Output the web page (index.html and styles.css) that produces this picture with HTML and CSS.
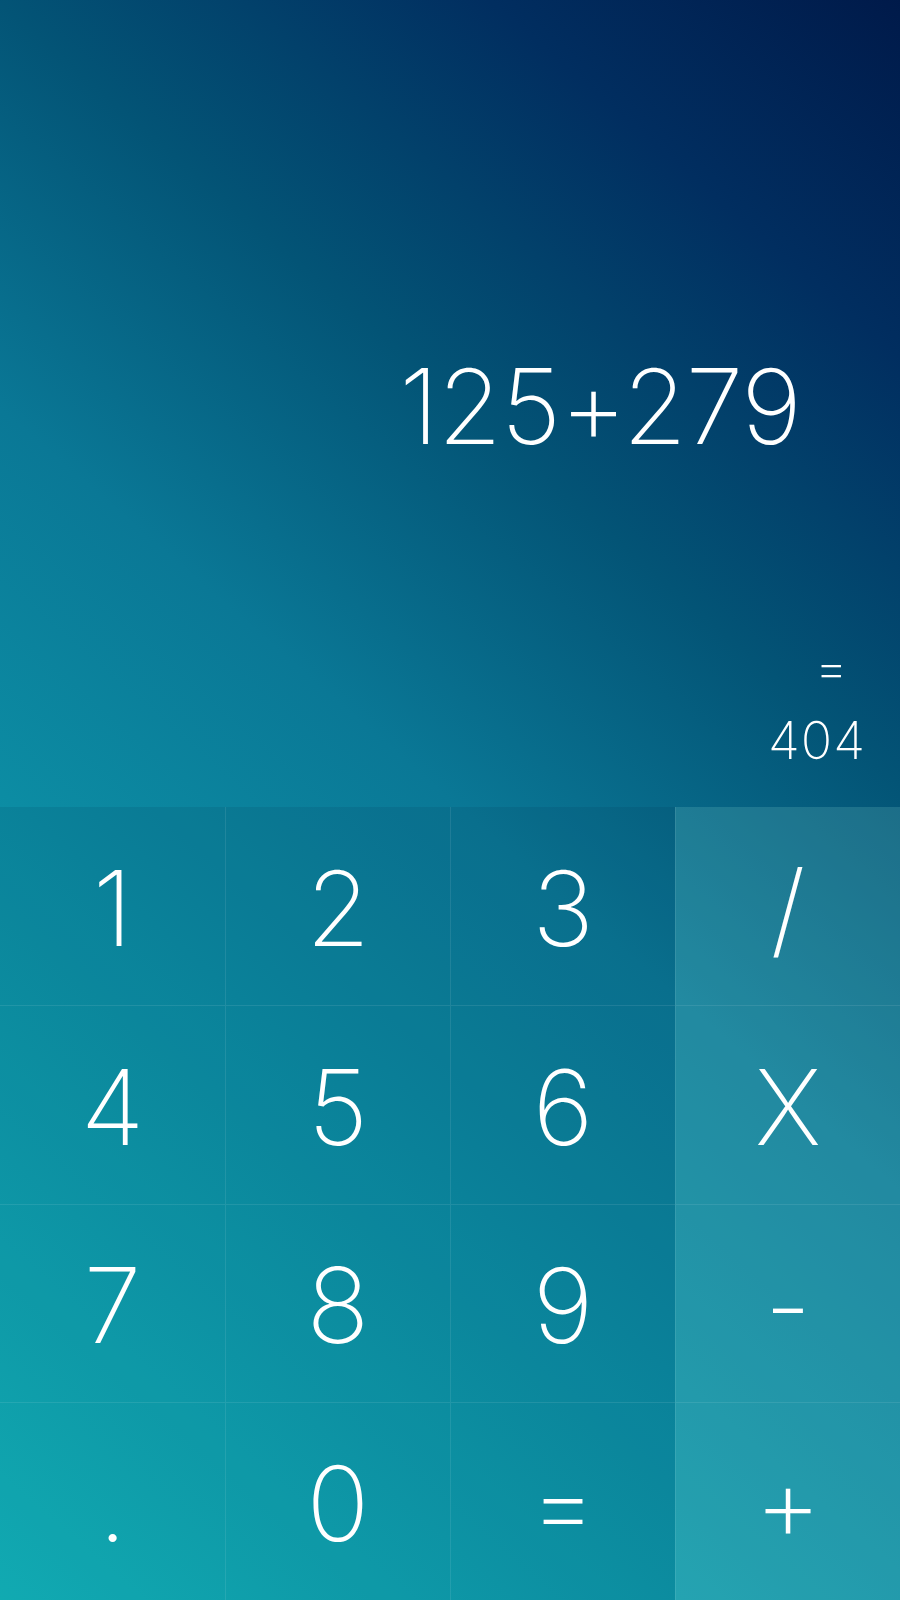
FILE: index.html
```html
<!DOCTYPE html>
<html lang="en">
<head>
<meta charset="utf-8">
<title>Calculator</title>
<link rel="stylesheet" href="styles.css">
</head>
<body>
<main class="calc">
  <section class="display">
    <div class="expression">125+279</div>
    <div class="result">
      <div class="result-eq">=</div>
      <div class="result-value">404</div>
    </div>
  </section>
  <section class="keypad">
    <button class="key digit">1</button>
    <button class="key digit">2</button>
    <button class="key digit">3</button>
    <button class="key op">/</button>
    <button class="key digit">4</button>
    <button class="key digit">5</button>
    <button class="key digit">6</button>
    <button class="key op">X</button>
    <button class="key digit">7</button>
    <button class="key digit">8</button>
    <button class="key digit">9</button>
    <button class="key op">-</button>
    <button class="key digit">.</button>
    <button class="key digit">0</button>
    <button class="key digit">=</button>
    <button class="key op">+</button>
  </section>
</main>
</body>
</html>
```

FILE: styles.css
```css
html, body {
  margin: 0;
  padding: 0;
}

body {
  width: 900px;
  height: 1600px;
  overflow: hidden;
  font-family: "Inter", "Roboto", "DejaVu Sans", sans-serif;
  color: #ffffff;
}

.calc {
  width: 900px;
  height: 1600px;
  display: flex;
  flex-direction: column;
  background: linear-gradient(41deg, #13b9be 0%, #0c8ca3 34%, #0a7896 50%, #035476 67%, #012e60 85%, #001a4a 100%);
}

.display {
  height: 807px;
  box-sizing: border-box;
  display: flex;
  flex-direction: column;
  padding-top: 354px;
  padding-bottom: 40px;
}

.expression {
  font-size: 104px;
  font-weight: 150;
  line-height: 1;
  text-align: right;
  padding-right: 99px;
  letter-spacing: -1px;
}

.result {
  margin-top: auto;
  display: flex;
  flex-direction: column;
  align-items: flex-end;
  gap: 21px;
  font-size: 52px;
  font-weight: 150;
  line-height: 1;
}

.result-eq {
  padding-right: 52px;
}

.result-value {
  padding-right: 35px;
  letter-spacing: 1px;
  margin-right: -1px;
}

.keypad {
  flex: 1;
  display: grid;
  grid-template-columns: repeat(4, 1fr);
  grid-template-rows: repeat(4, 1fr);
}

.key {
  appearance: none;
  margin: 0;
  padding: 4px 0 0;
  border: 0;
  border-left: 1px solid rgba(255, 255, 255, 0.09);
  border-top: 1px solid rgba(255, 255, 255, 0.09);
  display: flex;
  align-items: center;
  justify-content: center;
  font-family: inherit;
  font-size: 104px;
  font-weight: 150;
  line-height: 1;
  color: #ffffff;
  cursor: pointer;
}

.key:nth-child(4n+1) {
  border-left: 0;
}

.key:nth-child(-n+4) {
  border-top: 0;
}

.digit {
  background: rgba(0, 25, 50, 0.09);
}

.op {
  background: rgba(130, 210, 205, 0.2);
}
```
